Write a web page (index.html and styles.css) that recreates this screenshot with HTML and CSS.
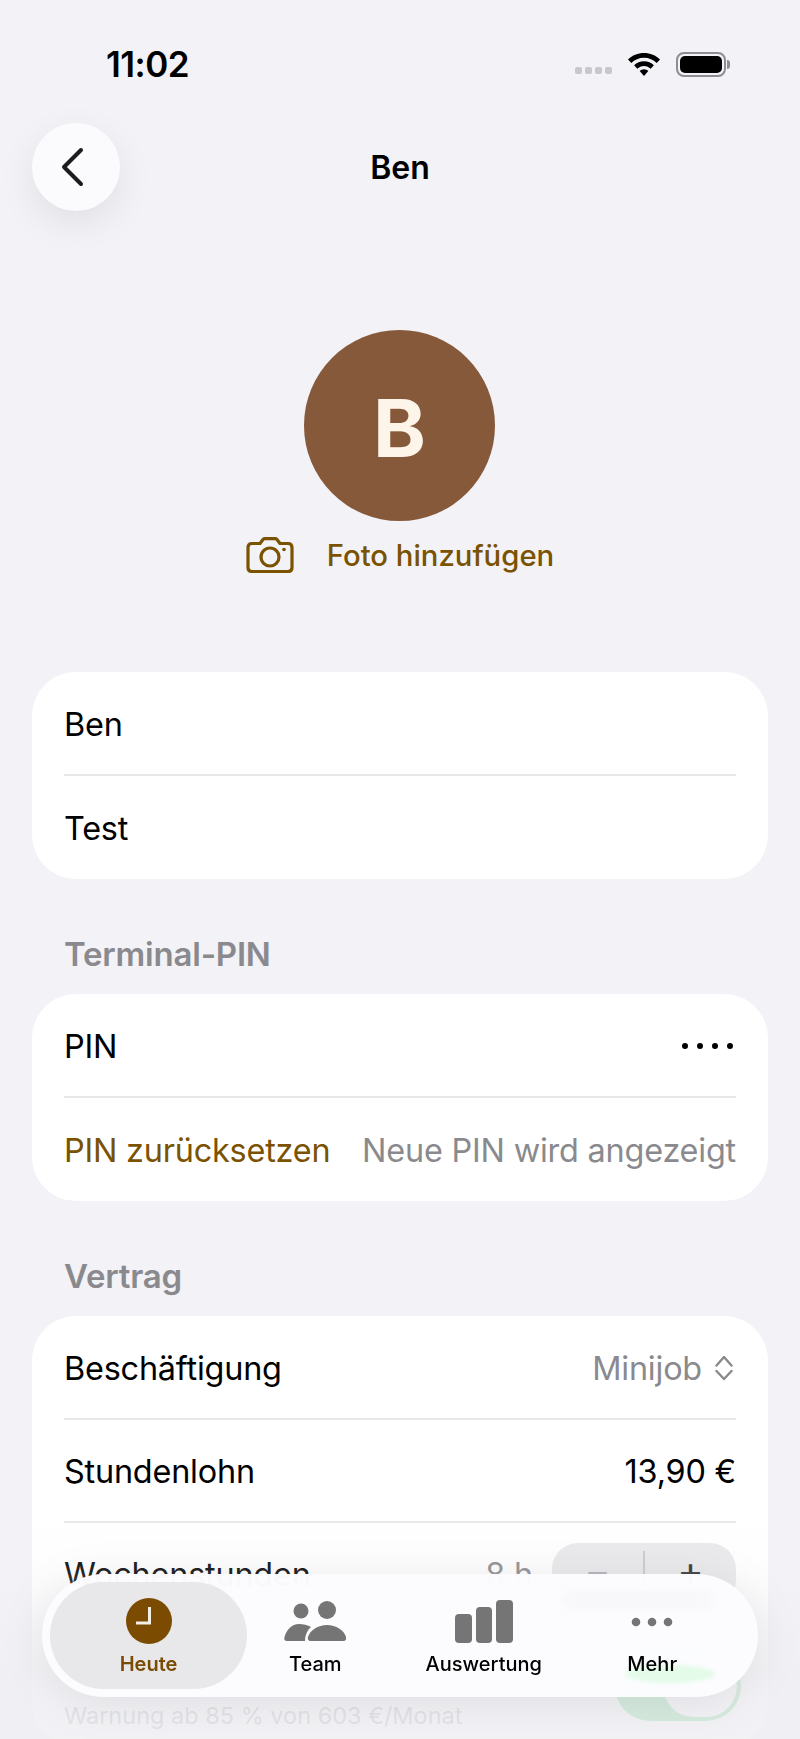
FILE: index.html
```html
<!DOCTYPE html>
<html lang="de">
<head>
  <meta charset="UTF-8">
  <title>Ben</title>
  <link rel="stylesheet" href="styles.css">
</head>
<body>
  <div class="screen">
    <div class="status-bar">
      <span class="status-time">11:02</span>
      <div class="status-icons">
        <div class="signal"><i></i><i></i><i></i><i></i></div>
        <svg class="wifi" width="34" height="25" viewBox="0 0 34 25">
          <path d="M17 1C10.800 1 5.200 3.400 1 7.400L4.300 10.900C7.600 7.700 12.100 5.700 17 5.700S26.400 7.700 29.700 10.900L33 7.400C28.800 3.400 23.200 1 17 1Z" fill="#000"/>
          <path d="M17 9.300C13.200 9.300 9.700 10.800 7.100 13.300L10.300 16.700C12.100 15 14.400 13.900 17 13.900S21.900 15 23.700 16.700L26.900 13.300C24.300 10.800 20.800 9.300 17 9.300Z" fill="#000"/>
          <path d="M17 17.300C15.300 17.300 13.800 18 12.700 19L17 24L21.300 19C20.200 18 18.700 17.300 17 17.300Z" fill="#000"/>
        </svg>
        <div class="battery"><div class="battery-fill"></div></div>
      </div>
    </div>

    <div class="top-bar">
      <button class="back-btn">
        <svg width="28" height="40" viewBox="0 0 28 40" fill="none">
          <path d="M22 3L5 20L22 37" stroke="#1c1c1e" stroke-width="4" stroke-linecap="round" stroke-linejoin="round"/>
        </svg>
      </button>
      <div class="top-title">Ben</div>
    </div>

    <div class="avatar-block">
      <div class="avatar">B</div>
      <div class="add-photo">
        <svg width="48" height="36" viewBox="0 0 48 36" fill="none" stroke="#7a5200" stroke-width="3.200" stroke-linejoin="round">
          <path d="M6 6.500H14L17 2.500C17.500 1.900 18 1.600 19 1.600H29C30 1.600 30.500 1.900 31 2.500L34 6.500H42C44.500 6.500 46 8 46 10.500V30.500C46 33 44.500 34.500 42 34.500H6C3.500 34.500 2 33 2 30.500V10.500C2 8 3.500 6.500 6 6.500Z"/>
          <circle cx="24" cy="20" r="9"/>
          <circle cx="38" cy="12.500" r="1.800" fill="#7a5200" stroke="none"/>
        </svg>
        <span>Foto hinzufügen</span>
      </div>
    </div>

    <div class="card">
      <div class="row"><span class="row-label">Ben</span></div>
      <div class="row"><span class="row-label">Test</span></div>
    </div>

    <div class="section-label">Terminal-PIN</div>
    <div class="card">
      <div class="row">
        <span class="row-label">PIN</span>
        <div class="pin-dots"><i></i><i></i><i></i><i></i></div>
      </div>
      <div class="row">
        <span class="row-label accent">PIN zurücksetzen</span>
        <span class="row-value muted">Neue PIN wird angezeigt</span>
      </div>
    </div>

    <div class="section-label">Vertrag</div>
    <div class="card">
      <div class="row">
        <span class="row-label">Beschäftigung</span>
        <div class="picker">
          <span class="row-value muted">Minijob</span>
          <svg width="18" height="26" viewBox="0 0 18 26" fill="none" stroke="#8a8a8e" stroke-width="2.400" stroke-linecap="round" stroke-linejoin="round">
            <path d="M1.500 10.500L9 2L16.500 10.500"/>
            <path d="M1.500 16L9 24L16.500 16"/>
          </svg>
        </div>
      </div>
      <div class="row">
        <span class="row-label">Stundenlohn</span>
        <span class="row-value">13,90 €</span>
      </div>
      <div class="row">
        <span class="row-label">Wochenstunden</span>
        <div class="stepper-wrap">
          <span class="row-value muted">8 h</span>
          <div class="stepper">
            <span class="step-btn step-minus">−</span>
            <span class="step-line"></span>
            <span class="step-btn">+</span>
          </div>
        </div>
      </div>
      <div class="row row-tall">
        <div class="row-note">Warnung ab 85 % von 603 €/Monat</div>
        <div class="toggle"><div class="toggle-knob"></div></div>
      </div>
    </div>

    <div class="bottom-fade"></div>

    <nav class="tab-bar">
      <div class="glow-stepper"></div>
      <div class="glow-toggle"></div>
      <div class="tab tab-active">
        <svg class="tab-icon" width="46" height="46" viewBox="0 0 46 46">
          <circle cx="23" cy="23" r="23" fill="#7a4b00"/>
          <path d="M23.500 9V25H10" fill="none" stroke="#f4efe6" stroke-width="3"/>
        </svg>
        <span>Heute</span>
      </div>
      <div class="tab">
        <svg class="tab-icon" width="62" height="46" viewBox="0 -3 62 46" fill="#757575">
          <circle cx="17" cy="10" r="7.500"/>
          <circle cx="43" cy="9" r="9"/>
          <path d="M3 40C1 40 0 39 0.300 37C2 29 8 23 15 23C19 23 24 24 27 26C23.500 29 21 34 21 40Z"/>
          <path d="M27 40C24.500 40 23.500 38.500 24 36C26 29 34 24 43 24C52 24 60 29 62 36C62.500 38.500 61.500 40 59 40Z"/>
        </svg>
        <span>Team</span>
      </div>
      <div class="tab">
        <svg class="tab-icon" width="58" height="46" viewBox="0 0 58 46" fill="#757575">
          <rect x="0" y="16" width="17" height="29" rx="4"/>
          <rect x="21" y="9" width="16" height="36" rx="4"/>
          <rect x="41" y="2" width="17" height="43" rx="4"/>
        </svg>
        <span>Auswertung</span>
      </div>
      <div class="tab">
        <svg class="tab-icon" width="42" height="46" viewBox="0 0 42 46" fill="#757575">
          <circle cx="5" cy="24" r="4.300"/>
          <circle cx="21" cy="24" r="4.300"/>
          <circle cx="37" cy="24" r="4.300"/>
        </svg>
        <span>Mehr</span>
      </div>
    </nav>
  </div>
</body>
</html>
```

FILE: styles.css
```css
html, body {
  margin: 0;
  padding: 0;
}

body {
  width: 800px;
  height: 1739px;
  overflow: hidden;
  background-color: #f2f2f7;
  color: #000000;
  font-family: Inter, "Liberation Sans", sans-serif;
}

.screen {
  position: relative;
  width: 800px;
  height: 1739px;
  overflow: hidden;
  padding: 0 32px;
  box-sizing: border-box;
}

/* Status bar */
.status-bar {
  display: flex;
  align-items: center;
  justify-content: space-between;
  height: 40px;
  padding: 44px 42px 0 74px;
}

.status-time {
  font-size: 35px;
  font-weight: 600;
  letter-spacing: -0.5px;
}

.status-icons {
  display: flex;
  align-items: center;
  gap: 15px;
}

.signal {
  display: flex;
  gap: 3px;
  margin-top: 13px;
}

.signal i {
  display: block;
  width: 7px;
  height: 7px;
  border-radius: 2px;
  background-color: #c8c8ca;
}

.battery {
  position: relative;
  width: 50px;
  height: 25px;
  padding: 2px;
  box-sizing: border-box;
  border: 2px solid #8e8e90;
  border-radius: 8px;
}

.battery::after {
  content: "";
  position: absolute;
  right: -6px;
  top: 6px;
  width: 3px;
  height: 9px;
  border-radius: 0 3px 3px 0;
  background-color: #8e8e90;
}

.battery-fill {
  height: 100%;
  border-radius: 5px;
  background-color: #000000;
}

/* Top bar */
.top-bar {
  display: grid;
  grid-template-columns: 88px 1fr 88px;
  align-items: center;
  height: 88px;
  margin-top: 39px;
}

.back-btn {
  display: flex;
  align-items: center;
  justify-content: center;
  width: 88px;
  height: 88px;
  padding: 0 6px 0 0;
  border: none;
  border-radius: 50%;
  background-color: #fbfbfe;
  box-shadow: 0 12px 36px rgba(0, 0, 0, 0.08);
}

.top-title {
  text-align: center;
  font-size: 32px;
  font-weight: 600;
}

/* Avatar */
.avatar-block {
  display: flex;
  flex-direction: column;
  align-items: center;
  margin-top: 119px;
  margin-bottom: 99px;
}

.avatar {
  display: flex;
  align-items: center;
  justify-content: center;
  width: 191px;
  height: 191px;
  margin-right: 1px;
  padding-top: 3px;
  box-sizing: border-box;
  border-radius: 50%;
  background-color: #87593b;
  color: #fdf5ea;
  font-size: 80px;
  font-weight: 700;
}

.add-photo {
  display: flex;
  align-items: center;
  gap: 33px;
  margin-top: 16px;
  color: #7a5200;
  font-size: 29.300px;
  font-weight: 500;
}

/* Cards */
.card {
  border-radius: 44px;
  background-color: #ffffff;
  padding: 0.500px 32px;
}

.row {
  display: flex;
  align-items: center;
  justify-content: space-between;
  height: 103px;
  padding-top: 2px;
  box-sizing: border-box;
  border-bottom: 2px solid #e8e8ea;
}

.row:last-child {
  border-bottom: none;
}

.row-tall {
  height: 120px;
  padding-top: 0;
}

.row-label,
.row-value {
  font-size: 32.400px;
  letter-spacing: -0.2px;
}

.row-label.accent {
  color: #7a5200;
}

.row-value.muted {
  color: #8a8a8e;
}

.row-note {
  align-self: flex-end;
  margin-bottom: 16px;
  font-size: 23.500px;
  line-height: 28px;
  color: #8a8a8e;
}

.section-label {
  margin: 56px 32px 21px;
  font-size: 33px;
  line-height: 38px;
  font-weight: 600;
  letter-spacing: -0.2px;
  color: #8a8a8e;
}

.pin-dots {
  display: flex;
  gap: 8.500px;
  margin-right: 3px;
}

.pin-dots i {
  display: block;
  width: 6.500px;
  height: 6.500px;
  border-radius: 50%;
  background-color: #000000;
}

.picker {
  display: flex;
  align-items: center;
  gap: 13px;
  padding-right: 3px;
}

.stepper-wrap {
  display: flex;
  align-items: center;
  gap: 19px;
}

.stepper {
  display: flex;
  align-items: center;
  width: 184px;
  height: 64px;
  margin-top: 1px;
  border-radius: 26px;
  background-color: #e9e9eb;
  color: #2c2c2e;
  font-size: 40px;
  line-height: 40px;
}

.step-btn {
  flex: 1;
  padding-bottom: 8px;
  text-align: center;
}

.step-minus {
  color: #aeaeb2;
}

.step-line {
  width: 2px;
  height: 48px;
  background-color: #c8c8ca;
}

.toggle {
  display: flex;
  justify-content: flex-end;
  width: 126px;
  height: 70px;
  margin-right: -5px;
  padding: 4px;
  box-sizing: border-box;
  border-radius: 35px;
  background-color: #34c759;
}

.toggle-knob {
  width: 74px;
  height: 62px;
  border-radius: 31px;
  background-color: #ffffff;
}

/* Fade over the scrolled content */
.bottom-fade {
  position: absolute;
  left: 0;
  right: 0;
  bottom: 0;
  height: 230px;
  background: linear-gradient(to bottom, rgba(242, 242, 247, 0), rgba(242, 242, 247, 0.15) 28%, rgba(240, 240, 244, 0.86) 70%, rgba(240, 240, 244, 0.86) 100%);
}

/* Tab bar */
.tab-bar {
  position: absolute;
  left: 42px;
  top: 1574px;
  display: flex;
  align-items: center;
  width: 716px;
  height: 123px;
  padding: 0 8px;
  box-sizing: border-box;
  overflow: hidden;
  border-radius: 62px;
  background-color: rgba(252, 252, 254, 0.98);
  filter: drop-shadow(0 6px 22px rgba(0, 0, 0, 0.08));
}

.tab {
  position: relative;
  display: flex;
  flex-direction: column;
  align-items: center;
  flex: none;
  width: 168.500px;
  height: 107px;
  padding-top: 16px;
  box-sizing: border-box;
  font-size: 20px;
  font-weight: 500;
}

.tab span {
  margin-top: 8px;
  line-height: 24px;
}

.tab-active {
  width: 197px;
  margin-right: -16px;
  border-radius: 54px;
  background-color: #e8e8ea;
  color: #7a4b00;
  font-weight: 600;
}

.glow-stepper {
  position: absolute;
  left: 519px;
  top: 16px;
  width: 153px;
  height: 20px;
  border-radius: 10px;
  background-color: #f8f8fa;
  filter: blur(4px);
}

.glow-toggle {
  position: absolute;
  left: 583px;
  top: 91px;
  width: 90px;
  height: 18px;
  border-radius: 50%;
  background-color: #e3fbe8;
  filter: blur(2px);
}
```
